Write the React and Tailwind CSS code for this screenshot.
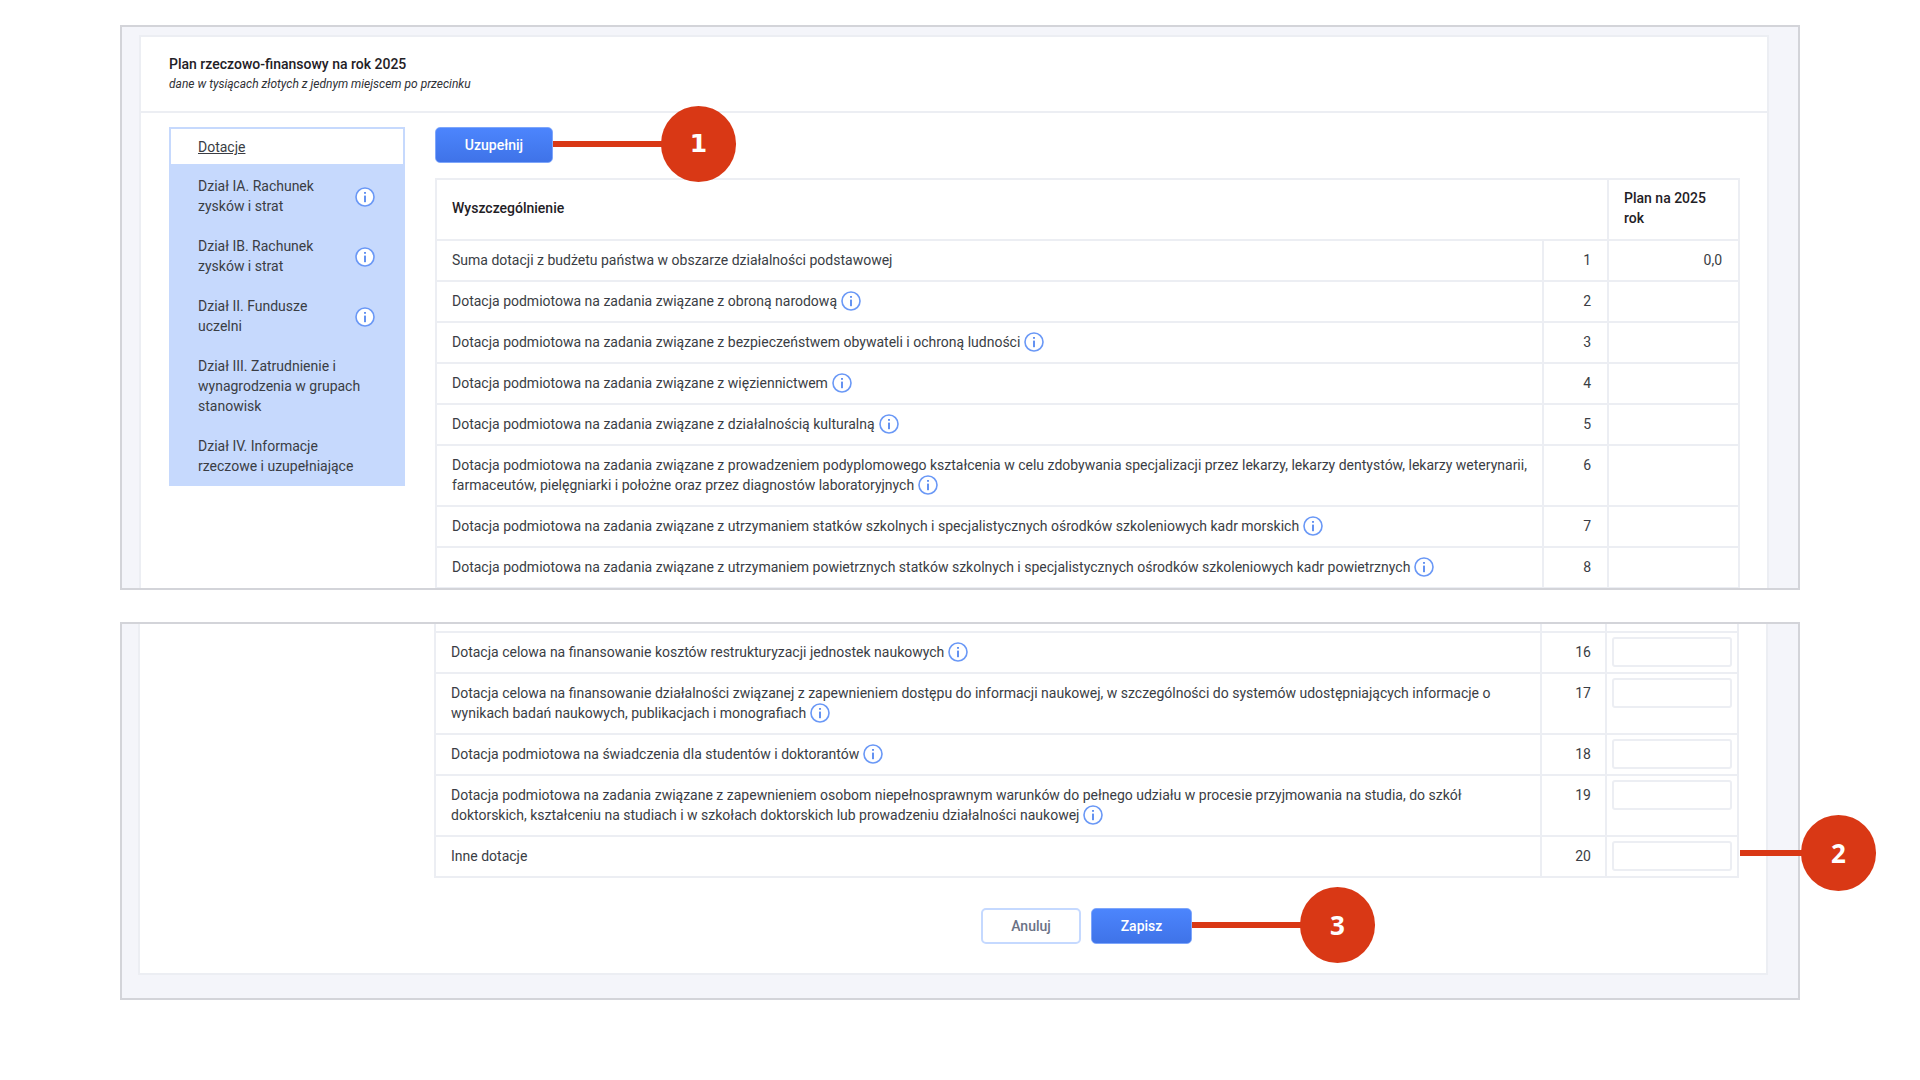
import React from "react";

const Info = ({ className = "" }) => (
  <svg viewBox="0 0 20 20" className={"inline-block w-5 h-5 align-[-5px] ml-1 " + className}>
    <circle cx="10" cy="10" r="9" fill="#ffffff" stroke="#6a98f6" strokeWidth="1.6" />
    <rect x="9.2" y="8.6" width="1.6" height="6.6" fill="#3f78ee" />
    <rect x="9.2" y="5" width="1.6" height="1.8" fill="#3f78ee" />
  </svg>
);

const topRows = [
  { t: "Suma dotacji z budżetu państwa w obszarze działalności podstawowej", n: 1, v: "0,0" },
  { t: "Dotacja podmiotowa na zadania związane z obroną narodową", n: 2, i: true },
  { t: "Dotacja podmiotowa na zadania związane z bezpieczeństwem obywateli i ochroną ludności", n: 3, i: true },
  { t: "Dotacja podmiotowa na zadania związane z więziennictwem", n: 4, i: true },
  { t: "Dotacja podmiotowa na zadania związane z działalnością kulturalną", n: 5, i: true },
  { t: "Dotacja podmiotowa na zadania związane z prowadzeniem podyplomowego kształcenia w celu zdobywania specjalizacji przez lekarzy, lekarzy dentystów, lekarzy weterynarii, farmaceutów, pielęgniarki i położne oraz przez diagnostów laboratoryjnych", n: 6, i: true, tall: true },
  { t: "Dotacja podmiotowa na zadania związane z utrzymaniem statków szkolnych i specjalistycznych ośrodków szkoleniowych kadr morskich", n: 7, i: true },
  { t: "Dotacja podmiotowa na zadania związane z utrzymaniem powietrznych statków szkolnych i specjalistycznych ośrodków szkoleniowych kadr powietrznych", n: 8, i: true },
];

const bottomRows = [
  { t: "Dotacja celowa na finansowanie kosztów restrukturyzacji jednostek naukowych", n: 16, i: true },
  { t: "Dotacja celowa na finansowanie działalności związanej z zapewnieniem dostępu do informacji naukowej, w szczególności do systemów udostępniających informacje o wynikach badań naukowych, publikacjach i monografiach", n: 17, i: true, tall: true },
  { t: "Dotacja podmiotowa na świadczenia dla studentów i doktorantów", n: 18, i: true },
  { t: "Dotacja podmiotowa na zadania związane z zapewnieniem osobom niepełnosprawnym warunków do pełnego udziału w procesie przyjmowania na studia, do szkół doktorskich, kształceniu na studiach i w szkołach doktorskich lub prowadzeniu działalności naukowej", n: 19, i: true, tall: true },
  { t: "Inne dotacje", n: 20 },
];

const cell = "border-2 border-[#eceef3] align-top";

const Row = ({ r, input }) => (
  <tr className={r.tall ? "h-[61px]" : "h-[41px]"}>
    <td className={cell + " pl-[15px] pr-3 pt-[9px] pb-2"}>
      {r.t}
      {r.i && <Info />}
    </td>
    <td className={cell + (input ? " pl-4 pr-[14px]" : " px-4") + " pt-[9px] pb-2 text-right"}>{r.n}</td>
    <td className={cell + (input ? " px-[5px] pt-[4px]" : " px-4 pt-[9px] pb-2 text-right")}>
      {input ? (
        <div className="h-[30px] rounded-[3px] border-2 border-[#eceef3] bg-white" />
      ) : (
        r.v
      )}
    </td>
  </tr>
);

const Colgroup = ({ a, b, c }) => (
  <colgroup>
    <col className={a} />
    <col className={b} />
    <col className={c} />
  </colgroup>
);

const sideItems = [
  { t: "Dział IA. Rachunek zysków i strat", i: true },
  { t: "Dział IB. Rachunek zysków i strat", i: true },
  { t: "Dział II. Fundusze uczelni", i: true },
  { t: "Dział III. Zatrudnienie i wynagrodzenia w grupach stanowisk" },
  { t: "Dział IV. Informacje rzeczowe i uzupełniające" },
];

const Callout = ({ n, className }) => (
  <div className={"absolute w-[75px] h-[76px] rounded-full bg-[#d93815] flex items-center justify-center text-white font-bold " + className}>
    {n}
  </div>
);

const openSans = " text-[26px] [font-family:'Open_Sans',sans-serif]";

const primaryBtn = "rounded-[5px] border border-[#7ea6fb] bg-gradient-to-b from-[#4c85fd] to-[#3f73e8] text-white text-sm font-medium";

export default function App() {
  return (
    <div className="relative min-h-[1080px] bg-white pt-[25px] pl-[120px] text-sm leading-5 text-[#3a3d44] [font-family:Roboto,sans-serif]">
      <div className="w-[1680px] h-[565px] overflow-hidden border-2 border-[#d3d4d9] bg-[#f4f5fa] pt-[8px] pl-[17px] pr-[29px]">
        <div className="h-[560px] border-2 border-b-0 border-[#eceef3] bg-white">
          <div className="h-[76px] border-b-2 border-[#eceef3] pl-[28px] pt-[17px]">
            <div className="font-medium text-[#1f2126]">Plan rzeczowo-finansowy na rok 2025</div>
            <div className="mt-[2px] text-xs italic text-[#2f3136]">dane w tysiącach złotych z jednym miejscem po przecinku</div>
          </div>
          <div className="flex pl-[28px] pr-[28px] pt-[14px] gap-[30px]">
            <div className="w-[236px] shrink-0 self-start bg-[#c6d9fd]">
              <div className="h-[39px] border-2 border-[#c6d9fd] bg-white pl-[27px] pt-[8px] underline">Dotacje</div>
              {sideItems.map((s) => (
                <div key={s.t} className="flex items-center justify-between pl-[29px] pr-[30px] py-[10px]">
                  <span className={s.i ? "w-[125px]" : ""}>{s.t}</span>
                  {s.i && <Info className="ml-0 mt-[2px] shrink-0" />}
                </div>
              ))}
            </div>
            <div className="w-[1303px]">
              <button className={primaryBtn + " w-[118px] h-[36px] block"}>Uzupełnij</button>
              <table className="mt-[15px] w-full table-fixed border-collapse">
                <Colgroup a="w-[1107px]" b="w-[65px]" c="w-[131px]" />
                <thead>
                  <tr className="h-[61px]">
                    <th colSpan={2} className={cell + " !align-middle pl-[15px] pr-4 pb-[4px] text-left font-medium text-[#1f2126]"}>Wyszczególnienie</th>
                    <th className={cell + " !align-middle pl-[15px] pr-4 pb-[4px] text-left font-medium text-[#1f2126]"}>Plan na 2025 rok</th>
                  </tr>
                </thead>
                <tbody>
                  {topRows.map((r) => (
                    <Row key={r.n} r={r} />
                  ))}
                </tbody>
              </table>
            </div>
          </div>
        </div>
      </div>

      <div className="mt-[32px] w-[1680px] h-[378px] border-2 border-[#d3d4d9] bg-[#f4f5fa] pl-[16px] pr-[30px] pb-[23px]">
        <div className="h-[351px] border-2 border-t-0 border-[#eceef3] bg-white pl-[294px] pr-[27px]">
          <table className="w-[1303px] table-fixed border-collapse">
            <Colgroup a="w-[1106px]" b="w-[65px]" c="w-[132px]" />
            <tbody>
              <tr className="h-[8px]">
                <td className="border-2 border-t-0 border-[#eceef3]" />
                <td className="border-2 border-t-0 border-[#eceef3]" />
                <td className="border-2 border-t-0 border-[#eceef3]" />
              </tr>
              {bottomRows.map((r) => (
                <Row key={r.n} r={r} input />
              ))}
            </tbody>
          </table>
          <div className="mt-[30px] flex justify-center gap-[10px]">
            <button className="w-[100px] h-[36px] rounded-[5px] border-2 border-[#c5d9ff] bg-white text-sm font-medium text-[#6b7285]">Anuluj</button>
            <button className={primaryBtn + " w-[101px] h-[36px]"}>Zapisz</button>
          </div>
        </div>
      </div>

      <div className="absolute left-[553px] top-[141px] w-[110px] h-[6px] bg-[#d93815]" />
      <Callout n="1" className="left-[661px] top-[106px] text-[25px] [font-family:'DejaVu_Sans',sans-serif]" />
      <div className="absolute left-[1740px] top-[850px] w-[64px] h-[6px] bg-[#d93815]" />
      <Callout n="2" className={"left-[1801px] top-[815px]" + openSans} />
      <div className="absolute left-[1192px] top-[922px] w-[110px] h-[6px] bg-[#d93815]" />
      <Callout n="3" className={"left-[1300px] top-[887px]" + openSans} />
    </div>
  );
}
